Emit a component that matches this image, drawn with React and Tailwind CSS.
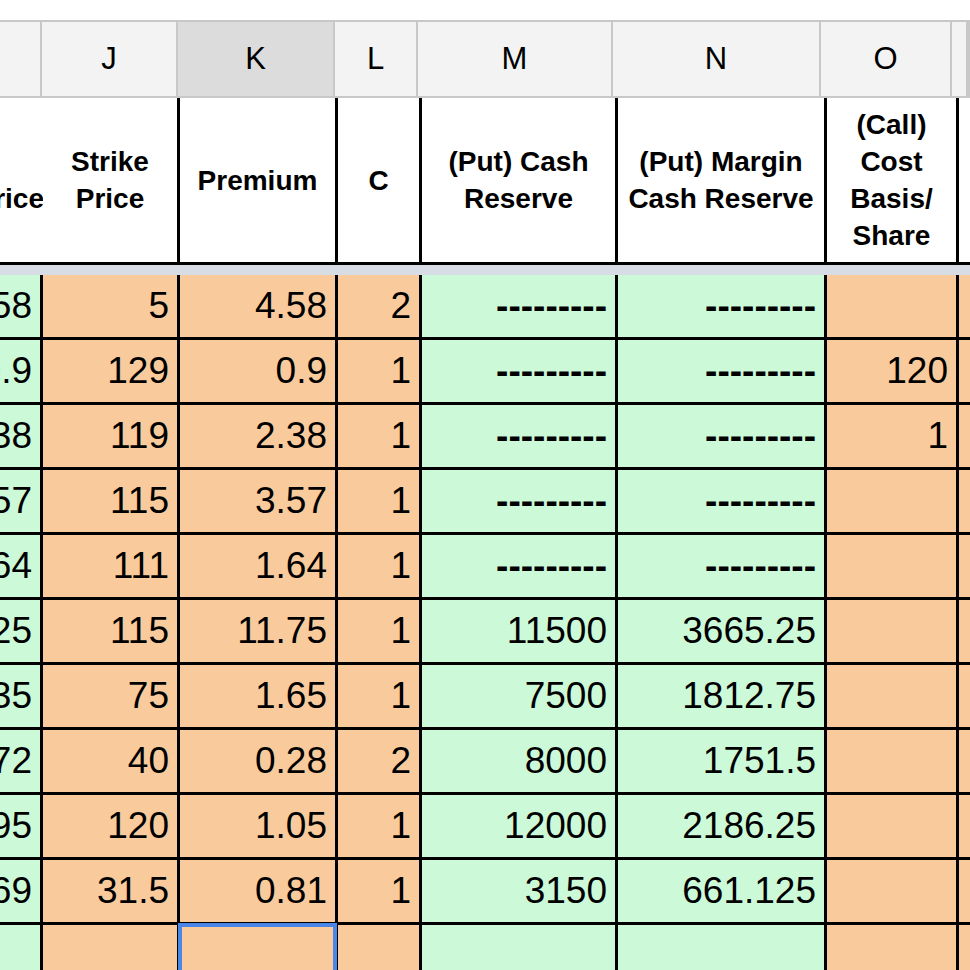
const cols = "grid grid-cols-[40px_134px_155px_81px_193px_206px_129px_14px]";
const O = "bg-[#f9cb9c]";
const G = "bg-[#ccf9d8]";
const colBg = [G, O, O, O, G, G, O, O];

const rows = [
  ["9.58", "5", "4.58", "2", "---------", "---------", "", ""],
  ["0.9", "129", "0.9", "1", "---------", "---------", "120", ""],
  ["2.38", "119", "2.38", "1", "---------", "---------", "1", ""],
  ["3.57", "115", "3.57", "1", "---------", "---------", "", ""],
  ["1.64", "111", "1.64", "1", "---------", "---------", "", ""],
  ["1.25", "115", "11.75", "1", "11500", "3665.25", "", ""],
  ["1.35", "75", "1.65", "1", "7500", "1812.75", "", ""],
  ["0.72", "40", "0.28", "2", "8000", "1751.5", "", ""],
  ["1.95", "120", "1.05", "1", "12000", "2186.25", "", ""],
  ["0.69", "31.5", "0.81", "1", "3150", "661.125", "", ""],
  ["", "", "", "", "", "", "", ""],
];

const letters = ["", "J", "K", "L", "M", "N", "O", ""];
const heads = ["Price", "Strike Price", "Premium", "C", "(Put) Cash Reserve", "(Put) Margin Cash Reserve", "(Call) Cost Basis/ Share", ""];

export default function App() {
  return (
    <div className="w-[970px] h-[970px] overflow-hidden bg-white font-[Liberation_Sans,Arial,sans-serif] text-black">
      <div className="h-[22px] border-b-2 border-[#c8c8c8]" />
      <div className={`${cols} h-[76px] bg-[#c8c8c8] gap-x-[2px] border-b-2 border-[#c8c8c8]`}>
        {letters.map((l, i) => (
          <div key={i} className={`flex items-center justify-center text-[31px] ${i === 2 ? "bg-[#dcdcdc]" : "bg-[#f3f3f3]"}`}>{l}</div>
        ))}
      </div>
      <div className={`${cols} h-[164px] bg-black gap-x-[3px]`}>
        {heads.map((h, i) => (
          <div key={i} className={`bg-white flex items-center overflow-hidden font-bold text-[28px] leading-[37px] ${i === 0 ? "justify-end pt-9 -mr-1" : "justify-center text-center " + (i === 5 ? "px-2" : "px-1")}`}>
            <span className={i === 0 ? "whitespace-nowrap" : ""}>{h}</span>
          </div>
        ))}
      </div>
      <div className="h-[13px] bg-[#d8dce4] border-t-[3px] border-black" />
      <div className={`${cols} auto-rows-[62px] bg-black gap-[3px]`}>
        {rows.map((r, ri) =>
          r.map((v, ci) => (
            <div
              key={ri + "-" + ci}
              className={`${colBg[ci]} flex items-center justify-end overflow-hidden whitespace-nowrap text-[37px] pr-2 ${ci === 0 ? "pr-1" : ""} ${ri === 10 && ci === 2 ? "border-4 border-[#4a86e8] -m-[2px]" : ""} ${v.startsWith("-") ? "font-bold text-[28px]" : ""}`}
            >
              {v}
            </div>
          ))
        )}
      </div>
    </div>
  );
}
